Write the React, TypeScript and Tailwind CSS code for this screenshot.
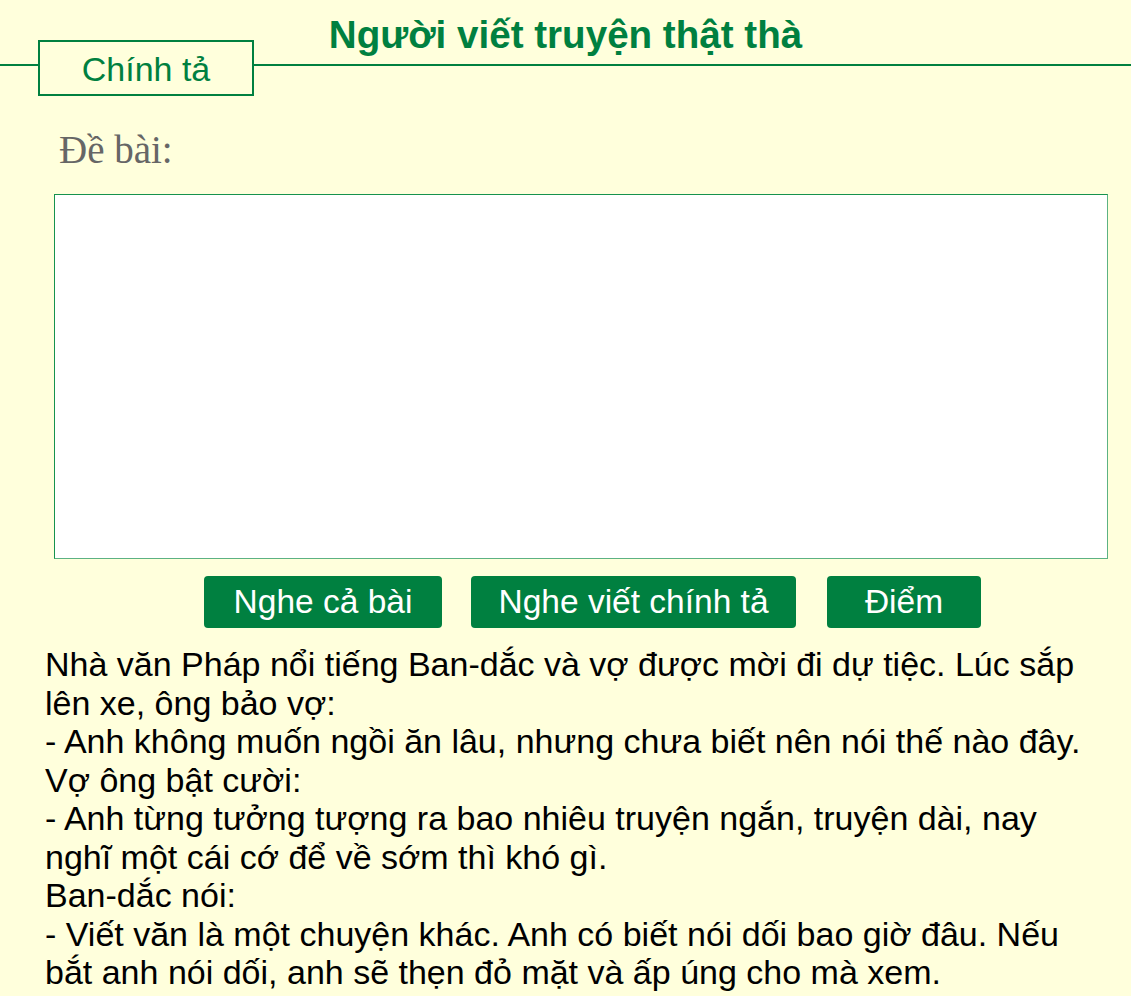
const paragraphs = [
  "Nhà văn Pháp nổi tiếng Ban-dắc và vợ được mời đi dự tiệc. Lúc sắp lên xe, ông bảo vợ:",
  "- Anh không muốn ngồi ăn lâu, nhưng chưa biết nên nói thế nào đây.",
  "Vợ ông bật cười:",
  "- Anh từng tưởng tượng ra bao nhiêu truyện ngắn, truyện dài, nay nghĩ một cái cớ để về sớm thì khó gì.",
  "Ban-dắc nói:",
  "- Viết văn là một chuyện khác. Anh có biết nói dối bao giờ đâu. Nếu bắt anh nói dối, anh sẽ thẹn đỏ mặt và ấp úng cho mà xem.",
];

const buttons = [
  { label: "Nghe cả bài", cls: "w-[238px]" },
  { label: "Nghe viết chính tả", cls: "w-[325px] ml-[29px]" },
  { label: "Điểm", cls: "w-[154px] ml-[31px]" },
];

export default function App() {
  return (
    <div className="min-h-[996px] bg-[#ffffdc] font-['Liberation_Sans',Arial,sans-serif] overflow-hidden">
      {/* Header: tab box on a rule, title centred above */}
      <div className="grid">
        <h1 className="col-start-1 row-start-1 pt-[16px] text-center text-[38.6px] leading-none font-bold text-[#008040]">
          Người viết truyện thật thà
        </h1>
        <div className="col-start-1 row-start-1 flex items-start pt-[40px]">
          <div className="w-[38px] h-[2px] mt-[24px] bg-[#008040]" />
          <div className="w-[216px] h-[56px] border-2 border-[#008040] bg-[#ffffdc] flex items-center justify-center pt-[3px] text-[34px] text-[#008040]">
            Chính tả
          </div>
          <div className="flex-1 h-[2px] mt-[24px] bg-[#008040]" />
        </div>
      </div>

      {/* Content */}
      <div className="pl-[45px] pr-[36px]">
        <div className="mt-[35px] ml-[14px] font-['Liberation_Serif','Times_New_Roman',serif] text-[39px] leading-[38px] text-[#666666]">
          Đề bài:
        </div>

        <div className="mt-[25px] ml-[9px] mr-[-13px] h-[365px] bg-white border border-t-[#16924e] border-l-[#16924e] border-b-[#5cb283] border-r-[#5cb283]" />

        <div className="flex mt-[17px] pl-[159px]">
          {buttons.map((b) => (
            <button
              key={b.label}
              className={`${b.cls} h-[52px] rounded-[4px] bg-[#008040] text-white text-[33.5px] leading-none flex items-center justify-center`}
            >
              {b.label}
            </button>
          ))}
        </div>

        <div className="mt-[17px] text-[34px] leading-[38.5px] text-black">
          {paragraphs.map((p, i) => (
            <p key={i}>{p}</p>
          ))}
        </div>
      </div>
    </div>
  );
}
